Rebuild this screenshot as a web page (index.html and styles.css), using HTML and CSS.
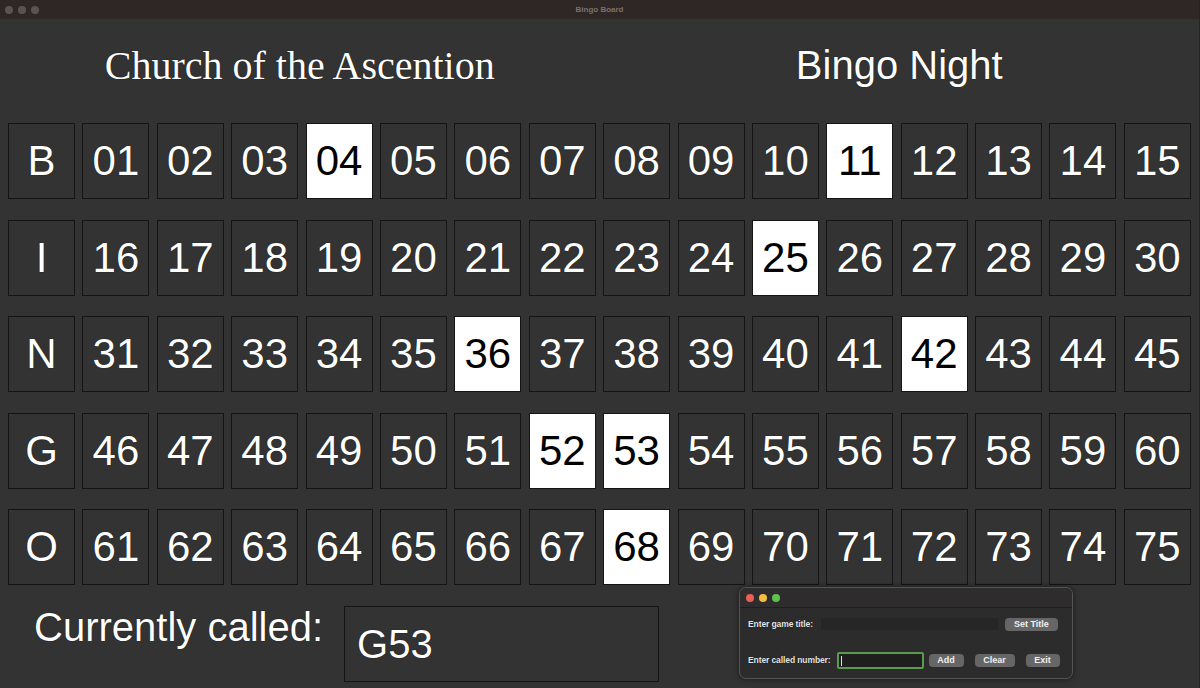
FILE: index.html
```html
<!DOCTYPE html>
<html>
<head>
<meta charset="utf-8">
<title>Bingo Board</title>
<link rel="stylesheet" href="styles.css">
</head>
<body>
<div class="window">
  <div class="titlebar">
    <div class="lights"><span></span><span></span><span></span></div>
    <div class="wtitle">Bingo Board</div>
  </div>
  <div class="header">
    <div class="church">Church of the Ascention</div>
    <div class="game">Bingo Night</div>
  </div>
  <div class="board">
    <div class="cell">B</div><div class="cell">01</div><div class="cell">02</div><div class="cell">03</div><div class="cell on">04</div><div class="cell">05</div><div class="cell">06</div><div class="cell">07</div><div class="cell">08</div><div class="cell">09</div><div class="cell">10</div><div class="cell on">11</div><div class="cell">12</div><div class="cell">13</div><div class="cell">14</div><div class="cell">15</div>
    <div class="cell">I</div><div class="cell">16</div><div class="cell">17</div><div class="cell">18</div><div class="cell">19</div><div class="cell">20</div><div class="cell">21</div><div class="cell">22</div><div class="cell">23</div><div class="cell">24</div><div class="cell on">25</div><div class="cell">26</div><div class="cell">27</div><div class="cell">28</div><div class="cell">29</div><div class="cell">30</div>
    <div class="cell">N</div><div class="cell">31</div><div class="cell">32</div><div class="cell">33</div><div class="cell">34</div><div class="cell">35</div><div class="cell on">36</div><div class="cell">37</div><div class="cell">38</div><div class="cell">39</div><div class="cell">40</div><div class="cell">41</div><div class="cell on">42</div><div class="cell">43</div><div class="cell">44</div><div class="cell">45</div>
    <div class="cell">G</div><div class="cell">46</div><div class="cell">47</div><div class="cell">48</div><div class="cell">49</div><div class="cell">50</div><div class="cell">51</div><div class="cell on">52</div><div class="cell on">53</div><div class="cell">54</div><div class="cell">55</div><div class="cell">56</div><div class="cell">57</div><div class="cell">58</div><div class="cell">59</div><div class="cell">60</div>
    <div class="cell">O</div><div class="cell">61</div><div class="cell">62</div><div class="cell">63</div><div class="cell">64</div><div class="cell">65</div><div class="cell">66</div><div class="cell">67</div><div class="cell on">68</div><div class="cell">69</div><div class="cell">70</div><div class="cell">71</div><div class="cell">72</div><div class="cell">73</div><div class="cell">74</div><div class="cell">75</div>
  </div>
  <div class="called">
    <div class="called-label">Currently called:</div>
    <div class="called-box">G53</div>
  </div>
</div>

<div class="panel">
  <div class="ptitle">
    <span class="l red"></span><span class="l yellow"></span><span class="l green"></span>
  </div>
  <div class="prow row1">
    <span class="plabel">Enter game title:</span>
    <div class="pinput title-input"></div>
    <div class="pbtn settitle">Set Title</div>
  </div>
  <div class="prow row2">
    <span class="plabel">Enter called number:</span>
    <div class="pinput num-input"><span class="caret"></span></div>
    <div class="pbtn add">Add</div>
    <div class="pbtn clear">Clear</div>
    <div class="pbtn exit">Exit</div>
  </div>
</div>
</body>
</html>
```
FILE: styles.css
```css
html, body {
  margin: 0;
  padding: 0;
  width: 1200px;
  height: 688px;
  overflow: hidden;
  background: #333333;
}
body {
  position: relative;
  font-family: "Liberation Sans", Arial, sans-serif;
}
.window {
  width: 1200px;
  height: 688px;
  background: #333333;
  box-sizing: border-box;
  border-right: 1px solid #242424;
}
.titlebar {
  height: 19px;
  background: #2f2725;
  position: relative;
  display: flex;
  align-items: center;
  justify-content: center;
}
.lights {
  position: absolute;
  left: 5px;
  top: 6px;
  display: flex;
  gap: 5px;
}
.lights span {
  width: 8px;
  height: 8px;
  border-radius: 50%;
  background: #5b5352;
}
.wtitle {
  font-size: 8px;
  font-weight: bold;
  color: #7a716f;
}
.header {
  display: grid;
  grid-template-columns: 1fr 1fr;
  height: 104px;
  align-items: center;
  color: #ffffff;
  text-shadow: 0 0 1px #000;
}
.church {
  font-family: "Liberation Serif", "Times New Roman", serif;
  font-size: 40px;
  text-align: center;
  margin-top: -12px;
}
.game {
  font-size: 40px;
  text-align: center;
  margin-top: -12px;
}
.board {
  display: grid;
  grid-template-columns: repeat(16, 67px);
  grid-auto-rows: 76px;
  column-gap: 7.4px;
  row-gap: 20.5px;
  padding-left: 8px;
}
.cell {
  box-sizing: border-box;
  border: 1px solid #141414;
  background: #333333;
  color: #ffffff;
  font-size: 42px;
  display: flex;
  align-items: center;
  justify-content: center;
  text-shadow: 0 0 1px #000;
}
.cell.on {
  background: #ffffff;
  color: #000000;
  text-shadow: none;
}
.called {
  display: flex;
  align-items: flex-start;
  padding-left: 34px;
  margin-top: 21px;
  gap: 21px;
}
.called-label {
  font-size: 40px;
  color: #ffffff;
  text-shadow: 0 0 1px #000;
  margin-top: -1px;
}
.called-box {
  box-sizing: border-box;
  width: 315px;
  height: 76px;
  border: 1px solid #141414;
  font-size: 40px;
  color: #ffffff;
  text-shadow: 0 0 1px #000;
  display: flex;
  align-items: center;
  padding-left: 12px;
}
.panel {
  position: absolute;
  left: 739px;
  top: 587px;
  width: 334px;
  height: 92px;
  box-sizing: border-box;
  background: #2c2c2c;
  border: 1px solid #555555;
  border-radius: 7px;
  box-shadow: 0 0 6px rgba(0, 0, 0, 0.5);
  overflow: hidden;
}
.ptitle {
  height: 19px;
  display: flex;
  align-items: center;
  gap: 5px;
  padding-left: 6px;
  background: #2e2c2c;
  border-bottom: 1px solid #1e1e1e;
}
.ptitle .l {
  width: 8px;
  height: 8px;
  border-radius: 50%;
}
.l.red { background: #ec5f57; }
.l.yellow { background: #f3bd40; }
.l.green { background: #5ec24c; }
.prow {
  display: flex;
  align-items: center;
  padding-left: 8px;
  font-size: 8.5px;
  color: #e6e6e6;
}
.row1 {
  margin-top: 9px;
  height: 14px;
}
.row2 {
  margin-top: 20px;
  height: 18px;
}
.plabel {
  text-shadow: 0 0 1px #000;
  font-weight: bold;
  letter-spacing: -0.1px;
}
.pinput {
  box-sizing: border-box;
}
.title-input {
  width: 177px;
  height: 12px;
  background: #262626;
  margin-left: 8px;
}
.num-input {
  width: 87px;
  height: 17px;
  border: 2px solid #5b9a4f;
  border-radius: 2px;
  background: #1f1f1f;
  margin-left: 6px;
  position: relative;
}
.caret {
  position: absolute;
  left: 2px;
  top: 2px;
  width: 1px;
  height: 10px;
  background: #e0e0e0;
}
.pbtn {
  box-sizing: border-box;
  height: 13px;
  border-radius: 4px;
  background: #666666;
  color: #f0f0f0;
  font-size: 9px;
  font-weight: bold;
  display: flex;
  align-items: center;
  justify-content: center;
}
.settitle { width: 53px; margin-left: 7px; }
.add { width: 35px; margin-left: 5px; }
.clear { width: 40px; margin-left: 11px; }
.exit { width: 34px; margin-left: 11px; }
```
